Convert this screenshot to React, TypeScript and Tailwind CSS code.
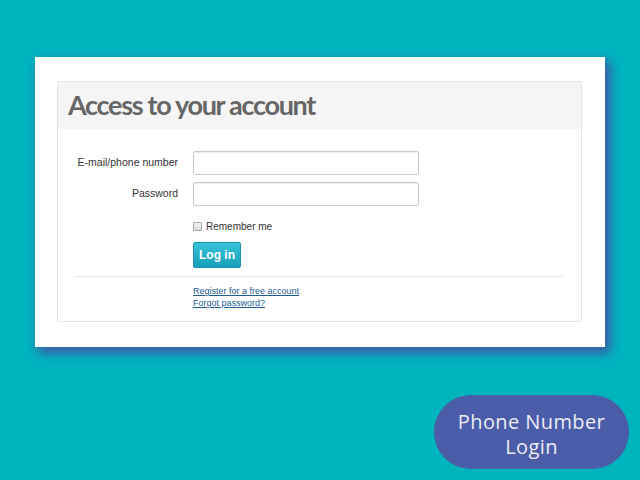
const labelCls =
  "w-[117px] text-right pr-[15px] text-[10.5px] text-[#333] [font-family:'Liberation_Sans',Arial,sans-serif]";

const inputCls =
  "w-[226px] h-[24px] border border-[#c8c8c8] rounded-[2px] shadow-[inset_0_1px_1px_rgba(0,0,0,0.08)]";

const App = () => {
  return (
    <div className="relative w-[640px] h-[480px] bg-[#00b4be] overflow-hidden [font-family:'Liberation_Sans',Arial,sans-serif]">
      <div className="pt-[57px] pl-[35px]">
        <div className="w-[570px] h-[290px] bg-white pt-[24px] pl-[22px] shadow-[4px_5px_10px_1px_#3f55a8]">
          <div className="w-[525px] h-[241px] border border-[#e3e3e3] rounded-[3px] overflow-hidden">
            {/* header */}
            <div className="h-[47px] bg-[#f5f5f5] pl-[10px] flex items-center">
              <h1 className="text-[27px] font-bold text-[#666] tracking-[-1.3px] [font-family:Lato,sans-serif]">
                Access to your account
              </h1>
            </div>

            {/* form */}
            <div className="pt-[22px] px-[18px]">
              <div className="flex items-center">
                <label className={labelCls}>E-mail/phone number</label>
                <input className={inputCls} />
              </div>
              <div className="flex items-center mt-[7px]">
                <label className={labelCls}>Password</label>
                <input type="password" className={inputCls} />
              </div>

              <div className="pl-[117px]">
                <div className="flex items-center mt-[13px] gap-[4px]">
                  <span className="w-[9px] h-[9px] border border-[#a8a8a8] rounded-[1px] bg-gradient-to-b from-[#f4f4f4] to-[#dcdcdc]" />
                  <span className="text-[10px] text-[#333]">Remember me</span>
                </div>
                <button className="mt-[8px] w-[48px] h-[26px] rounded-[2px] border border-[#1a93ab] bg-gradient-to-b from-[#35c3d9] to-[#1aa0ba] text-white text-[12px] font-bold">
                  Log in
                </button>
              </div>

              <div className="mt-[8px] border-t border-[#e5e5e5]" />

              <div className="pl-[117px] pt-[8px] flex flex-col items-start leading-[12px]">
                <a href="#" className="text-[9px] text-[#1d5c95] underline">
                  Register for a free account
                </a>
                <a href="#" className="text-[9px] text-[#1d5c95] underline">
                  Forgot password?
                </a>
              </div>
            </div>
          </div>
        </div>
      </div>

      {/* floating pill */}
      <button className="absolute left-[434px] top-[395px] w-[195px] h-[74px] rounded-full bg-[#4b5ca8] text-[#ececf4] text-[20px] leading-[25px] pt-[3px] tracking-[0.4px] [font-family:'Open_Sans',sans-serif]">
        Phone Number
        <br />
        Login
      </button>
    </div>
  );
};

export default App;
